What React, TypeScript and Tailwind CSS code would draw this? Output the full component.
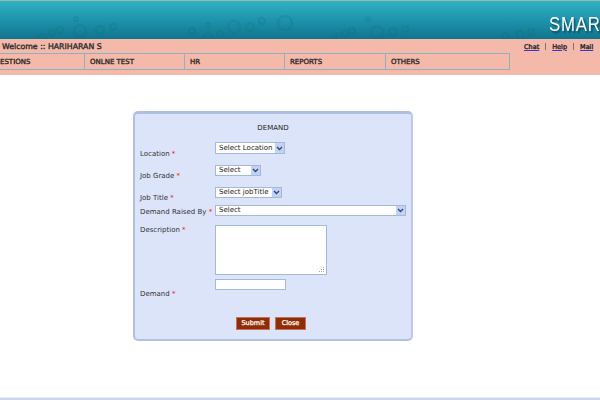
const navItems = [
  { label: "ESTIONS", width: "w-[85px]", pad: "pl-0" },
  { label: "ONLNE TEST", width: "w-[100px]", pad: "pl-[5px]" },
  { label: "HR", width: "w-[100px]", pad: "pl-[5px]" },
  { label: "REPORTS", width: "w-[101px]", pad: "pl-[5px]" },
  { label: "OTHERS", width: "w-[123px]", pad: "pl-[5px]" },
];

const bubbles = [
  [42, 37, 4], [52, 32, 3], [60, 29, 3], [80, 30, 6], [100, 29, 4], [113, 26, 3], [76, 18, 2],
  [192, 30, 3], [208, 36, 4], [220, 33, 3], [234, 26, 6], [250, 26, 4], [262, 20, 3], [285, 22, 7], [208, 24, 2],
  [335, 35, 2], [345, 33, 3], [352, 30, 3], [377, 31, 6], [393, 31, 4], [405, 28, 3], [368, 18, 2],
  [505, 35, 3], [520, 34, 4], [531, 31, 3],
];

function Banner() {
  return (
    <div className="relative h-[39px] overflow-hidden border-t border-[#9fb5b0] bg-gradient-to-b from-[#2fb2c4] via-[#1e93ab] to-[#10758f]">
      <svg className="absolute inset-0 blur-[0.5px]" width="600" height="39" fill="none" stroke="#0c6a82" strokeOpacity="0.2" strokeWidth="2">
        {bubbles.map(([cx, cy, r], i) => (
          <circle key={i} cx={cx} cy={cy} r={r} />
        ))}
      </svg>
      <div className="absolute left-[549px] top-[10px] origin-left scale-x-[0.8] whitespace-nowrap font-['Liberation_Sans',sans-serif] text-[21px] leading-[26px] tracking-[1px] text-white [text-shadow:2px_2px_2px_#0a4a5e]">
        SMAR
      </div>
    </div>
  );
}

function TopLink({ children }: { children: React.ReactNode }) {
  return <a className="text-[#101030] underline decoration-[#3b3bd0]">{children}</a>;
}

function PinkBar() {
  return (
    <div className="h-[36px] bg-[#f5b9aa] text-[7px] leading-[10px] text-[#2b2b2b] [-webkit-text-stroke:0.35px_#2b2b2b]">
      <div className="flex h-[14px] items-center justify-between pt-[1px]">
        <span className="pl-[2px] text-[7.8px]">Welcome :: HARIHARAN S</span>
        <div className="flex w-[76px] items-center gap-[6px] text-[6.5px]">
          <TopLink>Chat</TopLink>
          <span className="h-[7px] w-px bg-[#777]" />
          <TopLink>Help</TopLink>
          <span className="h-[7px] w-px bg-[#777]" />
          <TopLink>Mail</TopLink>
        </div>
      </div>
      <div className="flex h-[17px] w-[510px] border-y border-r border-[#8fb0c0]">
        {navItems.map((item, i) => (
          <div
            key={item.label}
            className={`flex items-center ${item.width} ${item.pad} ${i < navItems.length - 1 ? "border-r border-[#8fb0c0]" : ""}`}
          >
            {item.label}
          </div>
        ))}
      </div>
    </div>
  );
}

function Label({ text, className = "" }: { text: string; className?: string }) {
  return (
    <label className={`block w-[75px] shrink-0 whitespace-nowrap text-[7px] leading-[10px] text-[#333] ${className}`}>
      {text} <span className="text-[#f01818]">*</span>
    </label>
  );
}

function Select({ text, className }: { text: string; className: string }) {
  return (
    <div className={`relative ${className}`}>
      <select className="block size-full appearance-none rounded-none border border-[#a3b9d6] bg-white pl-[3px] text-[7px] leading-[9px] text-[#222]">
        <option>{text}</option>
      </select>
      <span className="pointer-events-none absolute right-px top-px flex h-[calc(100%-2px)] w-[9px] items-center justify-center bg-[#c3d2f0]">
        <svg width="7" height="5" viewBox="0 0 7 5" fill="none" stroke="#2d4a86" strokeWidth="1.4">
          <path d="M1 1l2.5 2.5L6 1" />
        </svg>
      </span>
    </div>
  );
}

function DemandForm() {
  return (
    <form className="ml-[133px] mt-[36px] h-[230px] w-[280px] rounded-[5px] border-2 border-t-[3px] border-[#aebfe2] border-r-[#bcc9e8] border-b-[#b2c1e3] bg-[#dce4f9] pl-[5px] pt-[9px]">
      <h2 className="h-[10px] pr-[5px] text-center text-[7px] leading-[10px] text-[#222]">DEMAND</h2>
      <div className="mt-[9px] flex">
        <Label text="Location" className="pt-[7px]" />
        <Select text="Select Location" className="h-[12px] w-[70px]" />
      </div>
      <div className="mt-[6px] flex">
        <Label text="Job Grade" className="pt-[6px]" />
        <Select text="Select" className="h-[11px] w-[46px]" />
      </div>
      <div className="mt-[6px] flex">
        <Label text="Job Title" className="pt-[6px]" />
        <Select text="Select jobTitle" className="h-[11px] w-[67px]" />
      </div>
      <div className="mt-[2px] flex">
        <Label text="Demand Raised By" className="pt-[2px]" />
        <Select text="Select" className="h-[11px] w-[191px]" />
      </div>
      <div className="mt-[8px] flex">
        <Label text="Description" />
        <div className="relative h-[50px] w-[112px]">
          <textarea className="block size-full resize-none border border-[#a3b9d6] bg-white" />
          <svg className="absolute bottom-[2px] right-[2px]" width="6" height="6" fill="#9aa5b5">
            <rect x="4" y="0" width="1" height="1" />
            <rect x="2" y="2" width="1" height="1" />
            <rect x="4" y="2" width="1" height="1" />
            <rect x="0" y="4" width="1" height="1" />
            <rect x="2" y="4" width="1" height="1" />
            <rect x="4" y="4" width="1" height="1" />
          </svg>
        </div>
      </div>
      <div className="mt-[4px] flex">
        <Label text="Demand" className="pt-[10px]" />
        <input className="h-[11px] w-[71px] border border-[#a3b9d6] bg-white" />
      </div>
      <div className="mt-[18px] flex gap-[5px] pl-[96px]">
        <button type="button" className="h-[13px] w-[34px] border border-[#c4705a] bg-[#8f2e05] text-[6.5px] leading-[11px] text-white [-webkit-text-stroke:0.25px_#ffffff]">Submit</button>
        <button type="button" className="h-[13px] w-[31px] border border-[#c4705a] bg-[#8f2e05] text-[6.5px] leading-[11px] text-white [-webkit-text-stroke:0.25px_#ffffff]">Close</button>
      </div>
    </form>
  );
}

export default function App() {
  return (
    <div className="flex h-[400px] w-[600px] flex-col overflow-hidden bg-white font-['DejaVu_Sans',Verdana,sans-serif]">
      <Banner />
      <PinkBar />
      <DemandForm />
      <div className="mt-auto h-[3px] border-t border-[#e6ecf8] bg-[#c9d6f0]" />
    </div>
  );
}
